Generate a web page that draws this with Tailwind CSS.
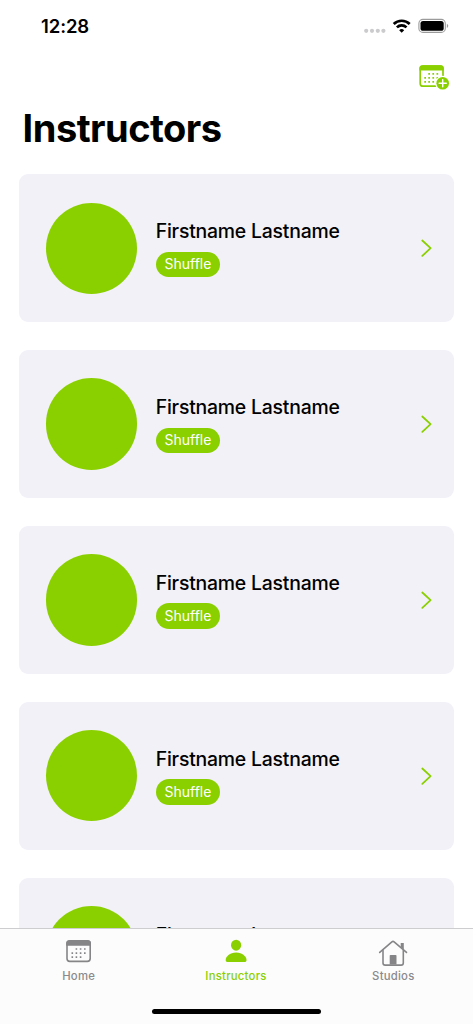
<!DOCTYPE html>
<html lang="en">
<head>
<meta charset="utf-8">
<title>Instructors</title>
<script src="https://cdn.jsdelivr.net/npm/@tailwindcss/browser@4"></script>
</head>
<body class="bg-white">
<div class="relative flex h-[1024px] w-[473px] flex-col overflow-hidden bg-white font-['Inter',sans-serif] text-black">
  <header class="flex h-[54px] shrink-0 items-start justify-between pl-[41px] pr-[24px]">
    <span class="mt-[13px] text-[18.5px] leading-[27px] font-semibold tracking-[-0.1px]">12:28</span>
    <svg class="mt-[16px]" width="86" height="20" viewBox="363 16 86 20">
      <g fill="#cbcbcd"><circle cx="366.2" cy="30.8" r="2.1"/><circle cx="372" cy="30.8" r="2.1"/><circle cx="377.8" cy="30.8" r="2.1"/><circle cx="383.4" cy="30.8" r="2.1"/></g>
      <g fill="none" stroke="#000" stroke-width="2.7"><path d="M393.7 24a11.5 11.5 0 0 1 16 0"/><path d="M396.9 27.4a6.9 6.9 0 0 1 9.6 0"/></g>
      <path d="M401.7 32.8l-2.5-2.6a3.6 3.6 0 0 1 5 0z"/>
      <rect x="418.9" y="19.4" width="26.4" height="13" rx="4" fill="none" stroke="#9b9b9b" stroke-width="1.1"/>
      <rect x="420.5" y="21" width="23.2" height="9.8" rx="2.6"/>
      <path d="M446.9 23.8c1.8.9 1.8 3.3 0 4.2z" fill="#9b9b9b"/>
    </svg>
  </header>

  <div class="flex h-[44px] shrink-0 justify-end pr-[22px]">
    <svg class="mt-[8px]" width="34" height="32" viewBox="417 62 34 32">
      <rect x="420.2" y="66" width="22.8" height="20.2" rx="2.8" fill="none" stroke="#8ad000" stroke-width="1.7"/>
      <path d="M419.4 70.5v-2.2a3 3 0 0 1 3-3h18.4a3 3 0 0 1 3 3v2.2z" fill="#8ad000"/>
      <g fill="#8ad000"><path d="M428.3 73h1.7v1.7h-1.7zM432.4 73h1.7v1.7h-1.7zM436.5 73h1.7v1.7h-1.7zM424.3 77h1.7v1.7h-1.7zM428.3 77h1.7v1.7h-1.7zM432.4 77h1.7v1.7h-1.7zM436.5 77h1.7v1.7h-1.7zM424.3 81h1.7v1.7h-1.7zM428.3 81h1.7v1.7h-1.7zM432.4 81h1.7v1.7h-1.7z"/></g>
      <circle cx="442.7" cy="83.2" r="7.5" fill="#fff"/><circle cx="442.7" cy="83.2" r="6.3" fill="#8ad000"/>
      <path d="M442.7 79.6v7.2M439.1 83.2h7.2" stroke="#fff" stroke-width="1.4" stroke-linecap="round"/>
    </svg>
  </div>

  <h1 class="flex h-[76px] shrink-0 items-start pt-[6px] pl-[22.6px] text-[38px] leading-[48px] font-bold tracking-[-0.52px]">Instructors</h1>

  <main id="list" class="flex shrink-0 flex-col gap-[27.6px] pl-[18.6px] pr-[18.6px]">
    <article class="flex h-[148.3px] shrink-0 items-center rounded-[9px] bg-[#f2f1f7] pl-[27.2px] pr-[21.5px]">
      <div class="size-[91.3px] shrink-0 rounded-full bg-[#8ad000]"></div>
      <div class="ml-[18.6px] flex flex-1 flex-col items-start">
        <h2 class="text-[19.4px] leading-[24px] font-medium tracking-[-0.2px] whitespace-nowrap">Firstname Lastname</h2>
        <span class="mt-[8.6px] flex h-[25.5px] w-[64.5px] items-center justify-center rounded-full bg-[#8ad000] text-[14px] leading-[18px] text-white [font-variant-ligatures:none]">Shuffle</span>
      </div>
      <svg width="13" height="20" viewBox="0 0 13 20" fill="none" stroke="#8ad000" stroke-width="1.8" stroke-linecap="round" stroke-linejoin="round"><path d="M2.3 2.5L10.6 10.2L2.3 17.9"/></svg>
    </article>
  </main>

  <nav class="absolute inset-x-0 bottom-0 flex h-[96px] flex-col border-t border-[#cdcdd0] bg-[#fcfcfc]">
    <div class="flex h-[60px] pr-[1px] text-[11.3px] leading-[14px] font-medium text-[#8a8a8d]">
      <div class="flex flex-1 flex-col items-center">
        <svg class="mt-[8px]" width="30" height="30" viewBox="64 937 30 30">
          <rect x="67" y="940.8" width="23.2" height="20.6" rx="2.8" fill="none" stroke="#858588" stroke-width="1.6"/>
          <path d="M66.2 945.8v-2.4a3.2 3.2 0 0 1 3.2-3.2h18.4a3.2 3.2 0 0 1 3.2 3.2v2.4z" fill="#858588"/>
          <path fill="#858588" d="M75.6 948.2h1.6v1.6h-1.6zM79.8 948.2h1.6v1.6h-1.6zM84 948.2h1.6v1.6H84zM71.5 952.3h1.6v1.6h-1.6zM75.6 952.3h1.6v1.6h-1.6zM79.8 952.3h1.6v1.6h-1.6zM84 952.3h1.6v1.6H84zM71.5 956.3h1.6v1.6h-1.6zM75.6 956.3h1.6v1.6h-1.6zM79.8 956.3h1.6v1.6h-1.6z"/>
        </svg>
        <span class="mt-[2px] tracking-[0.25px]">Home</span>
      </div>
      <div class="flex flex-1 flex-col items-center text-[#8ad000]">
        <svg class="mt-[8px]" width="30" height="30" viewBox="221 937 30 30" fill="#8ad000">
          <ellipse cx="236.1" cy="945.2" rx="5.1" ry="5.5"/>
          <path d="M227.8 962c-1.4 0-2.1-.8-2.1-2.1 0-3.1 4-7.3 10.4-7.3s10.4 4.2 10.4 7.3c0 1.3-.7 2.1-2.1 2.1z"/>
        </svg>
        <span class="mt-[2px] tracking-[0.25px]">Instructors</span>
      </div>
      <div class="flex flex-1 flex-col items-center">
        <svg class="mt-[8px]" width="32" height="30" viewBox="377.3 937 32 30" fill="none" stroke="#858588" stroke-width="1.6" stroke-linecap="round" stroke-linejoin="round">
          <path d="M380 952.4L392.2 941.8Q393.3 940.9 394.4 941.8L406.8 952.4"/>
          <path d="M383.3 950.5v12.4q0 2.2 2.2 2.2h15.9q2.2 0 2.2-2.2v-12.4"/>
          <path d="M401 943.1h3.1v6.6l-3.1-2.7z" fill="#858588" stroke="none"/>
          <path d="M390 964.5v-8.8q0-.8.8-.8h5.2q.8 0 .8.8v8.8z" fill="#858588" stroke="none"/>
        </svg>
        <span class="mt-[2px] tracking-[0.25px]">Studios</span>
      </div>
    </div>
    <div class="mx-auto mt-[19.5px] h-[5.6px] w-[169px] shrink-0 rounded-full bg-black"></div>
  </nav>
</div>
<script>
  const list = document.getElementById('list');
  const card = list.firstElementChild;
  for (let i = 0; i < 4; i++) list.appendChild(card.cloneNode(true));
</script>
</body>
</html>
